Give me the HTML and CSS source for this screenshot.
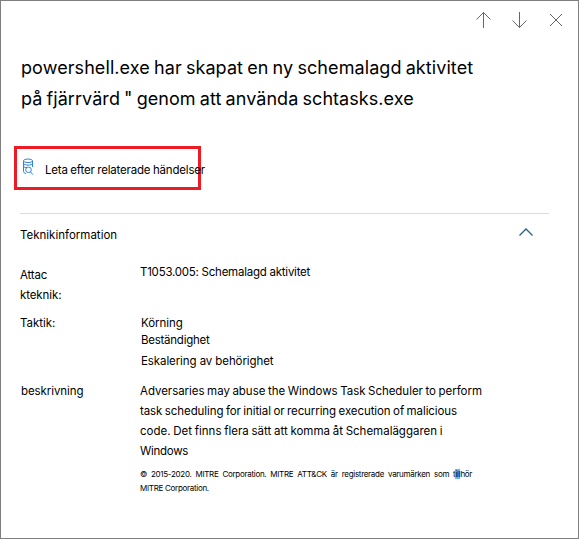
FILE: index.html
```
<!DOCTYPE html>
<html lang="sv">
<head>
<meta charset="utf-8">
<title>Teknikinformation</title>
<link rel="stylesheet" href="styles.css">
</head>
<body>
<main class="panel">
  <nav class="toolbar">
    <svg width="16" height="18" viewBox="0 0 16 18"><path d="M7.5 17V1.500M.5 8.500l7-7 7 7"/></svg>
    <svg width="16" height="18" viewBox="0 0 16 18"><path d="M7.500 1v15.500M.5 9.500l7 7 7-7"/></svg>
    <svg width="14" height="18" viewBox="0 0 14 18"><path d="M1 3l12 12M13 3L1 15"/></svg>
  </nav>
  <h1 class="title"><span class="t1">powershell.exe har skapat en ny schemalagd aktivitet</span><span class="t2">på fjärrvärd " genom att använda schtasks.exe</span></h1>
  <a class="related">
    <svg width="12" height="18" viewBox="0 0 12 18"><ellipse cx="6" cy="2.800" rx="4.500" ry="1.800"/><path d="M1.500 2.800v10.500c0 1.200 1 2 2.500 2.200M10.500 2.800v6.200M1.500 5.300c0 2.400 9 2.400 9 0M1.500 8c0 1.300 2 1.700 3.500 1.600"/><circle cx="6.500" cy="11.800" r="2.800"/><path d="M8.500 13.800l2.300 2.800"/></svg>
    <span class="related-label">Leta efter relaterade händelser</span>
  </a>
  <section class="details">
    <header class="section-head">
      <h2>Teknikinformation</h2>
      <svg width="16" height="10" viewBox="0 0 16 10"><path d="M1.500 8.500l6.500-6.500 6.500 6.500"/></svg>
    </header>
    <dl>
      <div class="row technique">
        <dt><span class="attac">Attac</span><span class="kteknik">kteknik:</span></dt>
        <dd><span class="id">T1053.005: Schemalagd aktivitet</span></dd>
      </div>
      <div class="row tactic">
        <dt>Taktik:</dt>
        <dd><span>Körning</span><span class="persist">Beständighet</span><span class="escalate">Eskalering av behörighet</span></dd>
      </div>
      <div class="row description">
        <dt>beskrivning</dt>
        <dd>
          <span class="d1">Adversaries may abuse the Windows Task Scheduler to perform</span>
          <span class="d2">task scheduling for initial or recurring execution of malicious</span>
          <span class="d3">code. Det finns flera sätt att komma åt Schemaläggaren i</span>
          <span class="d4">Windows</span>
          <small><span class="c1">© 2015-2020. MITRE Corporation. MITRE ATT&amp;CK är registrerade varumärken som t<span class="mark">ill</span>hör</span><span class="c2">MITRE Corporation.</span></small>
        </dd>
      </div>
    </dl>
  </section>
</main>
</body>
</html>
```
FILE: styles.css
```
* { box-sizing: border-box; }
body { margin: 0; background: #fff; color: #000; font: 11.5px/20px Inter, "Liberation Sans", sans-serif; white-space: nowrap; }
h1, h2, dl, dd { margin: 0; font-weight: 400; }
svg { display: block; fill: none; flex: none; }
.panel { width: 579px; height: 539px; border: 1px solid #7f7f7f; padding-left: 19px; }
.toolbar { display: flex; gap: 20px; justify-content: flex-end; padding: 10px 15px 0 0; height: 51px; }
.toolbar svg { stroke: #666; stroke-width: 1; }
.toolbar svg:last-child { margin-left: 1px; }
.title { font-size: 18px; line-height: 31px; padding-left: 1px; word-spacing: -1px; }
.title span, dt span, dd > span, small > span { display: block; }
.t1 { letter-spacing: 0.08px; }
.t2 { letter-spacing: 0.06px; }
.related { display: flex; width: 187px; height: 44px; margin: 32px 0 0 -6px; border: 3px solid #ed1c24; padding: 9px 0 0 5px; gap: 11px; }
.related svg { stroke: #3483d2; stroke-width: 1; }
.related-label { padding-top: 2px; letter-spacing: -0.18px; word-spacing: -0.5px; }
.details { width: 529px; margin-top: 23px; border-top: 1px solid #dcdcdc; }
.section-head { display: flex; justify-content: space-between; padding: 11px 15px 0 0; height: 51px; }
.section-head h2 { font-size: 11.5px; }
.section-head svg { margin-top: 2px; stroke: #286087; stroke-width: 1.3; }
.row { display: grid; grid-template-columns: 120px 1fr; }
.technique { height: 48px; }
.attac { letter-spacing: -0.2px; }
.kteknik { letter-spacing: -0.1px; }
.id { margin-top: -3px; letter-spacing: -0.24px; }
.tactic { height: 68px; letter-spacing: -0.04px; }
.tactic dd { padding-left: 1px; }
.persist { margin-top: -3px; letter-spacing: -0.25px; }
.escalate { margin-top: 1px; letter-spacing: -0.09px; }
.description dt { padding-left: 1px; letter-spacing: -0.08px; }
.d1 { letter-spacing: -0.035px; word-spacing: -0.6px; }
.d2 { letter-spacing: -0.09px; word-spacing: -0.6px; }
.d3 { letter-spacing: 0; word-spacing: -0.5px; }
.d4 { letter-spacing: -0.3px; }
small { display: block; margin-top: 6px; font-size: 8px; line-height: 14px; letter-spacing: -0.29px; }
.c1 { word-spacing: 2px; }
.mark { background: #62b4f5; }
```
